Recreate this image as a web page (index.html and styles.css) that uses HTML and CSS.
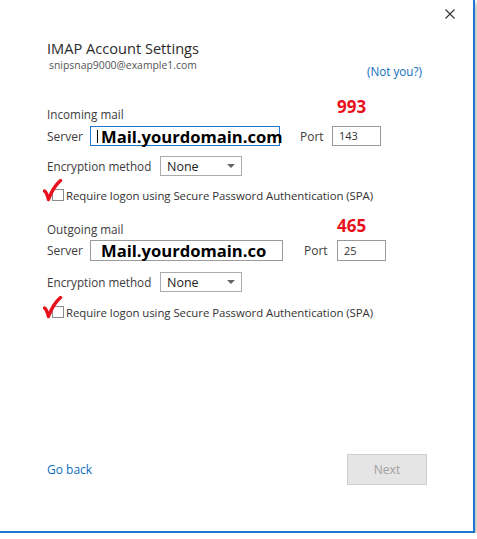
FILE: index.html
```html
<!DOCTYPE html>
<html>
<head>
  <title>IMAP Account Settings</title>
  <link rel="stylesheet" href="styles.css">
</head>
<body>
  <div class="dialog">
    <div class="topbar">
      <svg class="close" width="10" height="10" viewBox="0 0 10 10">
        <path d="M0.5 0.5 L9.5 9.5 M9.5 0.5 L0.5 9.5" stroke="#333" stroke-width="1.1" fill="none"/>
      </svg>
    </div>
    <div class="content">
      <h1>IMAP Account Settings</h1>
      <div class="account-row">
        <span class="email">snipsnap9000@example1.com</span>
        <a class="link not-you" href="#">(Not you?)</a>
      </div>

      <div class="section-head">
        <span class="section-label">Incoming mail</span>
        <span class="note">993</span>
      </div>
      <div class="server-row">
        <span class="field-label">Server</span>
        <div class="server-box focused"><span class="caret"></span>Mail.yourdomain.com</div>
        <span class="port-label">Port</span>
        <div class="port-box">143</div>
      </div>
      <div class="enc-row">
        <span class="field-label enc-label">Encryption method</span>
        <div class="dropdown">None<span class="arrow"></span></div>
      </div>
      <div class="check-row">
        <span class="checkbox"></span>
        <span>Require logon using Secure Password Authentication (SPA)</span>
        <svg class="tick" width="20" height="23" viewBox="0 0 20 23">
          <path d="M1.5 12 Q3.5 13 5.5 20.5 Q10 8 17.5 1.5" stroke="#e8101c" stroke-width="3.4" fill="none" stroke-linecap="round" stroke-linejoin="round"/>
        </svg>
      </div>

      <div class="section-head outgoing">
        <span class="section-label">Outgoing mail</span>
        <span class="note">465</span>
      </div>
      <div class="server-row second">
        <span class="field-label">Server</span>
        <div class="server-box wide">Mail.yourdomain.co</div>
        <span class="port-label">Port</span>
        <div class="port-box">25</div>
      </div>
      <div class="enc-row second">
        <span class="field-label enc-label">Encryption method</span>
        <div class="dropdown">None<span class="arrow"></span></div>
      </div>
      <div class="check-row second">
        <span class="checkbox"></span>
        <span>Require logon using Secure Password Authentication (SPA)</span>
        <svg class="tick" width="20" height="23" viewBox="0 0 20 23">
          <path d="M1.5 12 Q3.5 13 5.5 20.5 Q10 8 17.5 1.5" stroke="#e8101c" stroke-width="3.4" fill="none" stroke-linecap="round" stroke-linejoin="round"/>
        </svg>
      </div>
    </div>
    <div class="footer">
      <a class="link" href="#">Go back</a>
      <button class="next" disabled>Next</button>
    </div>
  </div>
</body>
</html>
```

FILE: styles.css
```css
body {
  margin: 0;
  background-color: #fff;
  font-family: "Open Sans", "Noto Sans", Arial, sans-serif;
  color: #3c3c3c;
}

.dialog {
  width: 473px;
  height: 531px;
  display: flex;
  flex-direction: column;
  background-color: #fff;
  border-right: 2px solid #1e78d2;
  border-bottom: 2px solid #1e78d2;
  box-shadow: 2px 3px 5px rgba(0, 0, 0, 0.3);
}

.topbar {
  height: 26px;
  display: flex;
  justify-content: flex-end;
  padding-right: 18px;
}

.close {
  margin-top: 9px;
}

.content {
  padding-left: 47px;
}

h1 {
  margin: 13px 0 0;
  font-size: 14.6px;
  line-height: 19px;
  font-weight: normal;
  color: #2b2b2b;
}

.account-row {
  width: 375px;
  display: flex;
  justify-content: space-between;
  height: 21px;
}

.email {
  font-size: 10.4px;
  line-height: 14px;
  color: #555;
  margin-left: 2px;
}

.link {
  color: #106ebe;
  text-decoration: none;
  font-size: 12px;
  line-height: 16px;
}

.not-you {
  margin-top: 5px;
  font-size: 11.7px;
}

.section-head {
  margin-top: 17px;
  height: 26px;
  display: flex;
}

.section-head.outgoing {
  margin-top: 12px;
  height: 22px;
}

.section-label {
  width: 290px;
  font-size: 11.7px;
  line-height: 16px;
  align-self: flex-end;
}

.note {
  font-size: 17px;
  line-height: 22px;
  font-weight: bold;
  color: #e8101c;
}

.server-row {
  margin-top: 4px;
  display: flex;
  align-items: center;
  height: 20px;
  font-size: 12px;
}

.server-row.second {
  margin-top: 3px;
  height: 21px;
}

.field-label {
  width: 43px;
}

.server-box {
  box-sizing: border-box;
  width: 190px;
  height: 20px;
  border: 1px solid #9a9a9a;
  display: flex;
  align-items: center;
  padding-left: 10px;
  white-space: nowrap;
  font-size: 16.6px;
  font-weight: bold;
  color: #000;
}

.server-box.focused {
  border-color: #1e78d2;
  padding-left: 6px;
}

.server-box.wide {
  width: 193px;
  height: 21px;
}

.caret {
  flex-shrink: 0;
  width: 1px;
  height: 13px;
  background-color: #000;
  margin-right: 3px;
}

.port-label {
  margin-left: 20px;
  width: 32px;
}

.second .port-label {
  margin-left: 21px;
  width: 33px;
}

.port-box {
  box-sizing: border-box;
  width: 49px;
  height: 20px;
  border: 1px solid #9a9a9a;
  padding-left: 6px;
  font-size: 11px;
  line-height: 18px;
  color: #333;
}

.second .port-box {
  height: 21px;
  line-height: 19px;
}

.enc-row {
  margin-top: 10px;
  display: flex;
  align-items: center;
  font-size: 11.7px;
}

.enc-row.second {
  margin-top: 11px;
}

.enc-label {
  width: 113px;
}

.dropdown {
  box-sizing: border-box;
  width: 82px;
  height: 20px;
  border: 1px solid #ababab;
  padding: 0 6px;
  display: flex;
  align-items: center;
  justify-content: space-between;
  font-size: 12.5px;
  color: #222;
}

.arrow {
  width: 0;
  height: 0;
  border-left: 4px solid transparent;
  border-right: 4px solid transparent;
  border-top: 4px solid #666;
}

.check-row {
  position: relative;
  margin-top: 11px;
  margin-left: 5px;
  display: flex;
  align-items: center;
  gap: 2px;
  height: 16px;
  font-size: 11.4px;
  letter-spacing: -0.05px;
  color: #333;
}

.check-row.second {
  margin-top: 12px;
}

.checkbox {
  box-sizing: border-box;
  width: 12px;
  height: 12px;
  border: 1px solid #8a8a8a;
}

.tick {
  position: absolute;
  left: -9px;
  top: -8px;
}

.footer {
  margin-top: auto;
  margin-bottom: 46px;
  padding: 0 46px 0 47px;
  display: flex;
  justify-content: space-between;
  align-items: center;
}

.next {
  width: 80px;
  height: 31px;
  background-color: #e5e5e5;
  border: 1px solid #cfcfcf;
  color: #a0a0a0;
  font-family: inherit;
  font-size: 12px;
}
```
